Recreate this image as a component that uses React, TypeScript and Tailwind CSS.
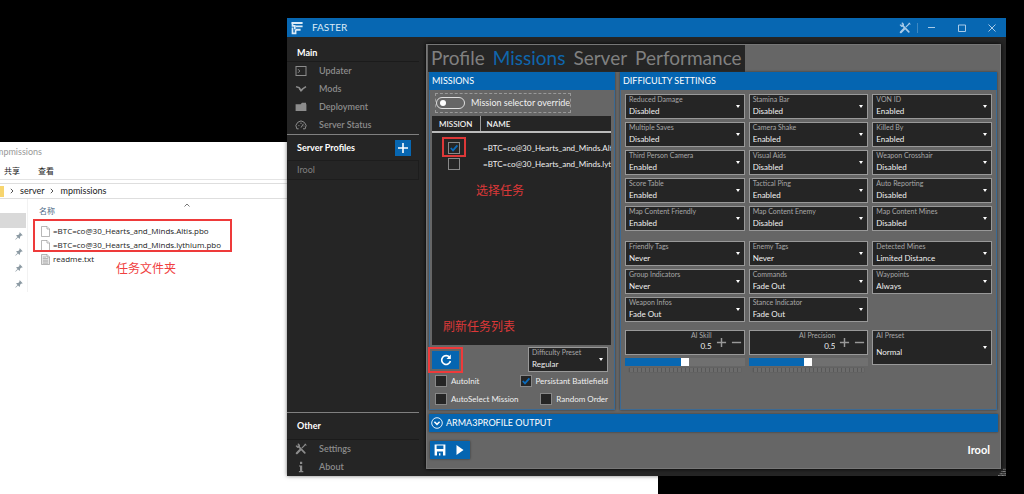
import { ReactNode, useState } from 'react'
import clsx from 'clsx'

const DIFFICULTY = [
  ['Reduced Damage', 'Disabled'],
  ['Stamina Bar', 'Disabled'],
  ['VON ID', 'Enabled'],
  ['Multiple Saves', 'Disabled'],
  ['Camera Shake', 'Enabled'],
  ['Killed By', 'Enabled'],
  ['Third Person Camera', 'Enabled'],
  ['Visual Aids', 'Disabled'],
  ['Weapon Crosshair', 'Disabled'],
  ['Score Table', 'Enabled'],
  ['Tactical Ping', 'Enabled'],
  ['Auto Reporting', 'Disabled'],
  ['Map Content Friendly', 'Enabled'],
  ['Map Content Enemy', 'Disabled'],
  ['Map Content Mines', 'Disabled'],
]

const HUD = [
  ['Friendly Tags', 'Never'],
  ['Enemy Tags', 'Never'],
  ['Detected Mines', 'Limited Distance'],
  ['Group Indicators', 'Never'],
  ['Commands', 'Fade Out'],
  ['Waypoints', 'Always'],
  ['Weapon Infos', 'Fade Out'],
  ['Stance Indicator', 'Fade Out'],
]

const TOGGLE_OPTIONS = ['Enabled', 'Disabled']
const HUD_OPTIONS = ['Never', 'Limited Distance', 'Fade Out', 'Always']

/* ---------- icons ---------- */

function ToolsIcon({ className }: { className?: string }) {
  return (
    <svg viewBox="0 0 12 12" className={className} fill="none" stroke="currentColor">
      <path d="M3.2 3.2 9.8 9.8" strokeWidth="1.7" strokeLinecap="round" />
      <path d="M1 2.6 2.6 4.2 4.2 3.6 4.4 2.2 2.8.8" strokeWidth="1.2" />
      <path d="M11 1 6.8 5.2" strokeWidth="1.1" />
      <path d="M5 7 1.8 10.2" strokeWidth="2.2" strokeLinecap="round" />
      <path d="M9.6.9 11.2 2.5" strokeWidth="1" />
    </svg>
  )
}

function ConsoleIcon() {
  return (
    <svg viewBox="0 0 12 12" className="h-3 w-3" fill="none" stroke="currentColor">
      <rect x="1" y="1.5" width="10" height="9" />
      <path d="M3 4.2 4.8 6 3 7.8" />
    </svg>
  )
}

function ModsIcon() {
  return (
    <svg viewBox="0 0 12 12" className="h-3 w-3" fill="none" stroke="currentColor">
      <path d="M1 3.6 4.2 4.8 6 7.4 8 5.6 11 3.6" strokeWidth="1.5" strokeLinejoin="round" />
      <path d="M4.4 5.6 6 8 7.8 6.2" strokeWidth="1.2" />
    </svg>
  )
}

function FolderIcon() {
  return (
    <svg viewBox="0 0 12 12" className="h-3 w-3" fill="currentColor">
      <path d="M1 3.2H5.6L7 1.8H11V3.2H11.4V10H.6V3.2Z" />
    </svg>
  )
}

function GaugeIcon() {
  return (
    <svg viewBox="0 0 12 12" className="h-3 w-3" fill="none" stroke="currentColor">
      <path d="M1.8 9.8A5 5 0 1 1 10.2 9.8H8" />
      <path d="M1.8 9.8H3.6M6 8.6 8.4 4.8M3.4 6.6H4.4M6 3.6V5M8.6 7H9.4" />
    </svg>
  )
}

function InfoIcon() {
  return (
    <svg viewBox="0 0 12 12" className="h-3 w-3" fill="currentColor">
      <path d="M5 .8H7.2V2.9H5ZM4 4.4H7.2V10H8.3V11.2H3.9V10H5V5.6H4Z" />
    </svg>
  )
}

function LogoIcon() {
  return (
    <svg viewBox="0 0 12 14" className="h-3.5 w-3" fill="none" stroke="currentColor">
      <path d="M.6 2H11.6M4.6 5.4H11.6M5 8.8H9.6" strokeWidth="1.9" />
      <path d="M1.5 1.2V4.8H3.8V8.2M1.5 6.4V12.4H4.6V8.6" strokeWidth="1.7" />
    </svg>
  )
}

function SaveIcon() {
  return (
    <svg viewBox="0 0 12 12" className="h-3 w-3" fill="currentColor" fillRule="evenodd">
      <path d="M.6.6H11.4V11.4H.6ZM2.6 1.6V5H9.4V1.6ZM3 7.4V11.4H5V9.2H6.4V11.4H9V7.4Z" />
    </svg>
  )
}

function PlusIcon({ className }: { className?: string }) {
  return (
    <svg viewBox="0 0 12 12" className={className} stroke="currentColor" strokeWidth="1.6">
      <path d="M6 1V11M1 6H11" />
    </svg>
  )
}

function PinIcon() {
  return (
    <svg viewBox="0 0 10 10" className="h-2 w-2 text-[#8c9aa3]" fill="currentColor">
      <path d="M6 .4 9.6 4 8.6 4.6 7.8 4.4 6.4 6 6.2 8 5.4 8.4 3.8 6.8.8 9.6.4 9.2 3.2 6.2 1.6 4.6 2 3.8 4 3.6 5.6 2.2 5.4 1.4Z" />
    </svg>
  )
}

function FileIcon({ lined }: { lined?: boolean }) {
  return (
    <svg viewBox="0 0 9 11" className="h-[11px] w-[9px]" fill={lined ? '#eeeeee' : '#ffffff'} stroke="#9a9a9a" strokeWidth=".7">
      <path d="M.5.5H6L8.5 3V10.5H.5Z" />
      <path d="M6 .5V3H8.5" />
      {lined && <path d="M1.8 3H5M1.8 4.6H7.2M1.8 6.2H7.2M1.8 7.8H7.2M1.8 9.2H7.2" />}
    </svg>
  )
}

/* ---------- file explorer ---------- */

function Explorer() {
  return (
    <section className="absolute top-[142px] right-[366px] bottom-0 left-0 overflow-hidden bg-white text-[9px] text-[#222]">
      <div className="-ml-1 flex h-5 items-center text-[#999]">mpmissions</div>
      <nav className="flex h-[18px] items-center gap-[18px] border-b border-[#e4e4e4] pl-1 text-[8px]">
        <button>共享</button>
        <button>查看</button>
      </nav>
      <div className="mt-[3px] flex h-4 items-center gap-1.5 border-y border-[#dedede]">
        <svg viewBox="0 0 4 11" className="h-[11px] w-1">
          <path d="M0 0H4V11H0Z" fill="#f7d56f" />
        </svg>
        <Chevron />
        <span>server</span>
        <Chevron />
        <span>mpmissions</span>
      </div>
      <div className="flex">
        <aside className="flex w-[28px] flex-col border-r border-[#f2f2f2] pt-[14px]">
          <div className="h-[15px] w-[26px] bg-[#d9d9d9]" />
          {[0, 1, 2, 3].map((i) => (
            <div key={i} className="flex h-4 items-center justify-end pr-1">
              <PinIcon />
            </div>
          ))}
        </aside>
        <div className="relative flex-1 pt-1 pl-[13px]">
          <div className="-ml-0.5 flex h-[15px] items-center text-[8px] text-[#4c6a86]">名称</div>
          <svg viewBox="0 0 6 4" className="absolute top-1 left-[156px] h-1 w-1.5" fill="none" stroke="#777">
            <path d="M.5 3.5 3 1 5.5 3.5" />
          </svg>
          <ul className="pt-1.5 font-['Open_Sans',sans-serif] text-[8px]">
            <FileRow name="=BTC=co@30_Hearts_and_Minds.Altis.pbo" />
            <FileRow name="=BTC=co@30_Hearts_and_Minds.lythium.pbo" />
            <FileRow name="readme.txt" lined />
          </ul>
          <div className="absolute top-5 left-[5px] h-[33px] w-[199px] border-2 border-[#ee3a3a]" />
          <p className="absolute top-[62px] left-[88px] text-[12px] leading-4 text-[#f04040]">任务文件夹</p>
        </div>
      </div>
    </section>
  )
}

function Chevron() {
  return (
    <svg viewBox="0 0 4 6" className="h-1.5 w-1" fill="none" stroke="#555">
      <path d="M.8.8 3 3 .8 5.2" />
    </svg>
  )
}

function FileRow({ name, lined }: { name: string; lined?: boolean }) {
  return (
    <li className="flex h-3.5 items-center gap-[3px] whitespace-nowrap">
      <FileIcon lined={lined} />
      {name}
    </li>
  )
}

/* ---------- form controls ---------- */

interface ComboProps {
  label: string
  value: string
  options: string[]
  className?: string
}

function Combo({ label, value, options, className }: ComboProps) {
  return (
    <label className={clsx('flex items-center border border-[#999] bg-[#252525] pr-1 pl-[3px]', className)}>
      <span className="flex h-full min-w-0 flex-1 flex-col justify-between">
        <span className="text-[7px] leading-[9px] whitespace-nowrap text-[#a8a8a8]">{label}</span>
        <span className="flex flex-1 items-center">
          <select defaultValue={value} className="h-3 w-full appearance-none text-[8px] leading-3 text-[#f0f0f0] outline-none">
            {options.map((option) => (
              <option key={option}>{option}</option>
            ))}
          </select>
        </span>
      </span>
      <svg viewBox="0 0 4 3" className="h-[3px] w-1" fill="#fff">
        <path d="M0 0H4L2 3Z" />
      </svg>
    </label>
  )
}

function Tick({ label, checked, className }: { label?: string; checked?: boolean; className?: string }) {
  return (
    <label className={clsx('flex h-3 items-center gap-1 whitespace-nowrap', className)}>
      <span className="grid">
        <input
          type="checkbox"
          defaultChecked={checked}
          aria-label={label ?? 'Select mission'}
          className="peer col-start-1 row-start-1 h-3 w-3 appearance-none border border-[#888] bg-[#252525]"
        />
        <svg
          viewBox="0 0 12 12"
          className="pointer-events-none invisible col-start-1 row-start-1 h-3 w-3 peer-checked:visible"
          fill="none"
          stroke="#0b6cbd"
          strokeWidth="1.8"
        >
          <path d="M2.8 6 5 8.4 9.4 3.4" />
        </svg>
      </span>
      {label}
    </label>
  )
}

function SkillSlider({ label }: { label: string }) {
  const [value, setValue] = useState(0.5)
  return (
    <div>
      <div className="flex h-[25px] items-center border border-[#999] bg-[#252525] pr-[2px]">
        <label className="flex h-full flex-1 flex-col items-end pr-1 text-[7px] leading-[9px] text-[#a8a8a8]">
          {label}
          <input
            value={value}
            onChange={(e) => setValue(Number(e.target.value) || 0)}
            className="h-3 w-10 text-right text-[8px] leading-3 text-[#f0f0f0] outline-none"
          />
        </label>
        <div className="flex gap-1 text-[#999]">
          <button aria-label="Increase" onClick={() => setValue(Math.min(1, value + 0.1))}>
            <PlusIcon className="h-[11px] w-[11px]" />
          </button>
          <button aria-label="Decrease" onClick={() => setValue(Math.max(0, value - 0.1))}>
            <svg viewBox="0 0 12 12" className="h-[11px] w-[11px]" stroke="currentColor" strokeWidth="1.6">
              <path d="M1 6H11" />
            </svg>
          </button>
        </div>
      </div>
      <input
        type="range"
        min={0}
        max={1}
        step={0.05}
        value={value}
        aria-label={label}
        onChange={(e) => setValue(Number(e.target.value))}
        style={{ background: `linear-gradient(to right, #0767b2 ${value * 100}%, #707070 ${value * 100}%)` }}
        className="mt-[3px] block h-2 w-full appearance-none [&::-webkit-slider-thumb]:h-2 [&::-webkit-slider-thumb]:w-2 [&::-webkit-slider-thumb]:appearance-none [&::-webkit-slider-thumb]:bg-white"
      />
      <div className="mx-1 mt-[2px] h-1 bg-[repeating-linear-gradient(to_right,#585858_0_1px,#6c6c6c_1px_4px)] shadow-[0_0_1px_#444]" />
    </div>
  )
}

function GroupBox({ title, children, className }: { title: string; children: ReactNode; className?: string }) {
  return (
    <section className={clsx('flex flex-col border border-t-0 border-[#3c6a93] shadow-[0_0_2px_#333]', className)}>
      <h2 className="-mx-px flex h-[18px] items-center bg-[#0565b1] pl-[3px] text-[9px] text-white">{title}</h2>
      {children}
    </section>
  )
}

/* ---------- server manager window ---------- */

function TitleBar() {
  return (
    <header className="flex h-[19px] shrink-0 items-center bg-[#0767b2] pr-2.5 pl-1 text-[#dcebf7]">
      <LogoIcon />
      <h1 className="pl-[9px] text-[10px]">FASTER</h1>
      <div className="ml-auto flex items-center text-[#a9cbe8]">
        <button aria-label="Tools">
          <ToolsIcon className="h-3 w-3" />
        </button>
        <span className="ml-1.5 h-2.5 w-px bg-[#3f88c2]" />
        <button aria-label="Minimize" className="ml-2.5">
          <svg viewBox="0 0 8 8" className="h-2 w-2" stroke="currentColor">
            <path d="M0 3.5H7" />
          </svg>
        </button>
        <button aria-label="Maximize" className="ml-[22px]">
          <svg viewBox="0 0 8 8" className="h-2 w-2" fill="none" stroke="currentColor">
            <path d="M.5 1H7.5V7.5H.5Z" />
          </svg>
        </button>
        <button aria-label="Close" className="ml-[22px]">
          <svg viewBox="0 0 8 8" className="h-2 w-2" stroke="currentColor">
            <path d="M.5.5 7.5 7.5M7.5.5.5 7.5" />
          </svg>
        </button>
      </div>
    </header>
  )
}

function NavItem({ icon, children }: { icon: ReactNode; children: ReactNode }) {
  return (
    <a href="#" className="flex h-[18px] items-center gap-3 pl-2 text-[#8c8c8c]">
      {icon}
      {children}
    </a>
  )
}

function Sidebar() {
  return (
    <nav className="flex w-[132px] shrink-0 flex-col text-[9px] font-semibold">
      <h2 className="flex h-6 items-end pb-[2px] pl-[10px] font-bold text-white">Main</h2>
      <div className="border-t border-[#1b1b1b]">
        <NavItem icon={<ConsoleIcon />}>Updater</NavItem>
        <NavItem icon={<ModsIcon />}>Mods</NavItem>
        <NavItem icon={<FolderIcon />}>Deployment</NavItem>
        <NavItem icon={<GaugeIcon />}>Server Status</NavItem>
      </div>
      <div className="flex h-[26px] items-center justify-between border-t border-[#808080] pr-2 pl-[10px]">
        <h2 className="font-bold text-white">Server Profiles</h2>
        <button aria-label="Add profile" className="bg-[#0767b2] p-[2px] text-white">
          <PlusIcon className="h-3 w-3" />
        </button>
      </div>
      <a href="#" className="flex h-5 items-center border border-[#1d1d1d] pl-[9px] font-normal text-[#808080]">
        Irool
      </a>
      <h2 className="mt-auto flex h-[27px] items-center border-t border-[#808080] pl-[10px] font-bold text-white">Other</h2>
      <div className="border-t border-[#1b1b1b]">
        <NavItem icon={<ToolsIcon className="h-3 w-3" />}>Settings</NavItem>
        <NavItem icon={<InfoIcon />}>About</NavItem>
      </div>
    </nav>
  )
}

function MissionsPanel() {
  return (
    <GroupBox title="MISSIONS" className="w-[186px] shrink-0">
      <div className="flex flex-1 flex-col px-[2px]">
        <label className="mt-[3px] ml-[3px] flex h-5 w-fit items-center gap-1.5 border border-dashed border-[#999] text-[9px] whitespace-nowrap text-[#f0f0f0]">
          <input
            type="checkbox"
            role="switch"
            className="flex h-3 w-[29px] appearance-none items-center rounded-full border border-[#e0e0e0] px-[3px] before:h-1.5 before:w-1.5 before:rounded-full before:bg-white checked:justify-end"
          />
          Mission selector override
        </label>
        <div className="relative mt-[3px] mr-px flex-1 overflow-hidden bg-[#252525]">
          <table className="w-full table-fixed text-left text-[8px] text-[#f0f0f0]">
            <thead>
              <tr className="h-4 border-b-2 border-[#bbb]">
                <th className="w-12 border-r border-[#999] text-center font-semibold">MISSION</th>
                <th className="pl-1.5 font-semibold">NAME</th>
              </tr>
            </thead>
            <tbody>
              <tr className="h-[22px] align-bottom">
                <td>
                  <Tick checked className="ml-4" />
                </td>
                <td className="overflow-hidden pl-[3px] whitespace-nowrap">=BTC=co@30_Hearts_and_Minds.Altis.pbo</td>
              </tr>
              <tr className="h-4 align-bottom">
                <td>
                  <Tick className="ml-4" />
                </td>
                <td className="overflow-hidden pl-[3px] whitespace-nowrap">=BTC=co@30_Hearts_and_Minds.lythium.pbo</td>
              </tr>
            </tbody>
          </table>
          <div className="absolute top-[21px] left-2.5 h-5 w-6 border-2 border-[#dd3838]" />
          <p className="absolute top-[67px] left-11 text-[12px] leading-4 text-[#dd3838]">选择任务</p>
          <p className="absolute bottom-2.5 left-[11px] text-[12px] leading-4 text-[#dd3838]">刷新任务列表</p>
        </div>
        <div className="flex h-[29px] items-center justify-between pr-1">
          <div className="relative">
            <button aria-label="Refresh" className="flex h-[18px] w-[27px] items-center justify-center bg-[#0565b1] text-white">
              <svg viewBox="0 0 12 12" className="h-3 w-3" fill="none" stroke="currentColor" strokeWidth="1.6">
                <path d="M9.6 3.4A4.4 4.4 0 1 0 10.4 7" />
                <path d="M10.8.6V4.9H6.5Z" fill="currentColor" stroke="none" />
              </svg>
            </button>
            <div className="absolute -inset-x-1 -inset-y-1 border-2 border-[#ee3a3a]" />
          </div>
          <Combo label="Difficulty Preset" value="Regular" options={['Recruit', 'Regular', 'Veteran', 'Custom']} className="h-[25px] w-20" />
        </div>
        <div className="flex flex-col gap-1.5 pt-px pr-1 pb-1 pl-[3px] text-[8px] text-[#f0f0f0]">
          <div className="flex justify-between">
            <Tick label="AutoInit" />
            <Tick label="Persistant Battlefield" checked />
          </div>
          <div className="flex justify-between">
            <Tick label="AutoSelect Mission" />
            <Tick label="Random Order" />
          </div>
        </div>
      </div>
    </GroupBox>
  )
}

function DifficultyPanel() {
  return (
    <GroupBox title="DIFFICULTY SETTINGS" className="min-w-0 flex-1">
      <div className="px-1">
        <div className="mt-1 grid grid-cols-3 gap-x-1 gap-y-[3px]">
          {DIFFICULTY.map(([label, value]) => (
            <Combo key={label} label={label} value={value} options={TOGGLE_OPTIONS} className="h-[25px]" />
          ))}
        </div>
        <div className="mt-[10px] grid grid-cols-3 gap-x-1 gap-y-[3px]">
          {HUD.map(([label, value]) => (
            <Combo key={label} label={label} value={value} options={HUD_OPTIONS} className="h-[25px]" />
          ))}
        </div>
        <div className="mt-2 grid grid-cols-3 items-start gap-x-1">
          <SkillSlider label="AI Skill" />
          <SkillSlider label="AI Precision" />
          <Combo label="AI Preset" value="Normal" options={['Low', 'Normal', 'High', 'Custom']} className="h-[35px]" />
        </div>
      </div>
    </GroupBox>
  )
}

export default function App() {
  return (
    <main className="relative h-screen overflow-hidden bg-black font-['Lato','Noto_Sans_CJK_SC',sans-serif]">
      <Explorer />

      <section className="absolute top-[18px] right-[18px] bottom-[18px] left-[287px] flex flex-col bg-[#252525] shadow-[0_0_4px_#0008]">
        <TitleBar />
        <div className="flex min-h-0 flex-1">
          <Sidebar />
          <div className="m-[7px] mr-[5px] flex min-w-0 flex-1 flex-col border border-[#777] bg-[#666] px-[2px] shadow-[0_0_4px_#000]">
            <div className="-ml-px flex h-[27px] w-fit items-center gap-2 bg-[#252525] px-[3px] text-[19px] text-[#808080]">
              <button>Profile</button>
              <button className="text-[#0f66ad]">Missions</button>
              <button>Server</button>
              <button>Performance</button>
            </div>
            <div className="flex flex-1 gap-[5px] pr-px">
              <MissionsPanel />
              <DifficultyPanel />
            </div>
            <button className="mt-1 flex h-[18px] shrink-0 items-center gap-[3px] bg-[#0565b1] pl-[2px] text-[9px] text-white shadow-[0_0_2px_#333]">
              <svg viewBox="0 0 12 12" className="h-3 w-3" fill="none" stroke="currentColor">
                <circle cx="6" cy="6" r="5.3" strokeWidth=".9" />
                <path d="M3.4 4.8 6 7.4 8.6 4.8" strokeWidth="1.5" />
              </svg>
              ARMA3PROFILE OUTPUT
            </button>
            <footer className="flex h-9 shrink-0 items-center justify-between pr-2 pl-px">
              <div className="flex bg-[#0565b1] text-white shadow-[0_0_2px_#333]">
                <button aria-label="Save" className="flex h-[18px] w-5 items-center justify-center">
                  <SaveIcon />
                </button>
                <button aria-label="Launch" className="flex h-[18px] w-5 items-center justify-center">
                  <svg viewBox="0 0 8 10" className="h-2.5 w-2" fill="currentColor">
                    <path d="M.5 0V10L7.5 5Z" />
                  </svg>
                </button>
              </div>
              <strong className="text-[11px] text-white">Irool</strong>
            </footer>
          </div>
        </div>
        <svg viewBox="0 0 9 9" className="absolute right-0 bottom-0 h-2 w-2" stroke="#aaa" strokeDasharray="1 .5">
          <path d="M6 1.5H9M4 4H9M2 6.5H9M0 8.5H9" />
        </svg>
      </section>
    </main>
  )
}
